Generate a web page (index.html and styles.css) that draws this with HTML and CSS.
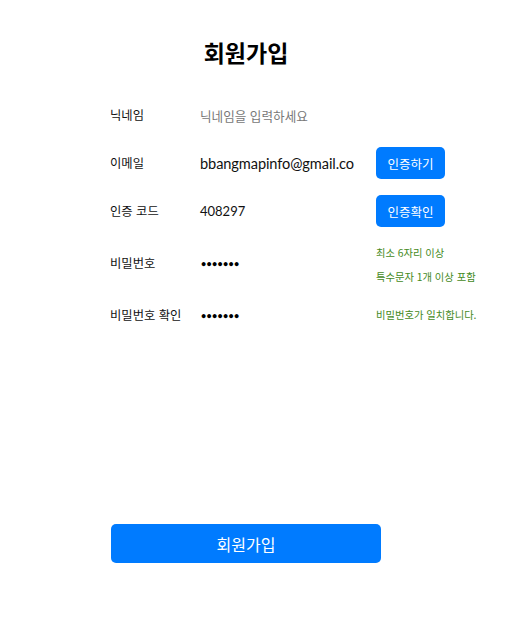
FILE: index.html
```html
<!DOCTYPE html>
<html lang="ko">
<head>
<meta charset="utf-8">
<title>회원가입</title>
<link rel="stylesheet" href="styles.css">
</head>
<body>
<main class="page">
  <h1 class="title">회원가입</h1>
  <div class="form">
    <div class="row">
      <span class="label">닉네임</span>
      <span class="field placeholder">닉네임을 입력하세요</span>
    </div>
    <div class="row">
      <span class="label">이메일</span>
      <span class="field email">bbangmapinfo@gmail.co</span>
      <button class="btn-small">인증하기</button>
    </div>
    <div class="row">
      <span class="label">인증 코드</span>
      <span class="field">408297</span>
      <button class="btn-small">인증확인</button>
    </div>
    <div class="row row-tall">
      <span class="label">비밀번호</span>
      <span class="field dots">•••••••</span>
      <div class="hints hints-low">
        <p class="hint">최소 6자리 이상</p>
        <p class="hint">특수문자 1개 이상 포함</p>
      </div>
    </div>
    <div class="row">
      <span class="label">비밀번호 확인</span>
      <span class="field dots">•••••••</span>
      <div class="hints">
        <p class="hint">비밀번호가 일치합니다.</p>
      </div>
    </div>
  </div>
  <button class="submit">회원가입</button>
</main>
</body>
</html>
```
FILE: styles.css
```css
* { box-sizing: border-box; }
html, body { margin: 0; padding: 0; background: #fff; }
body {
  font-family: "Lato", "Noto Sans CJK KR", sans-serif;
  color: #111;
}
.page {
  width: 270px;
  margin-left: 111px;
  padding-top: 36px;
}
.title {
  margin: 0;
  text-align: center;
  font-family: "Noto Sans CJK KR", sans-serif;
  font-size: 23px;
  font-weight: 700;
  line-height: 32px;
  color: #000;
}
.form {
  margin-top: 31px;
  margin-left: -1px;
  width: 380px;
  display: flex;
  flex-direction: column;
  gap: 16px;
}
.row {
  display: flex;
  align-items: center;
  height: 32px;
}
.row-tall { height: 40px; }
.label {
  width: 90px;
  font-size: 12.3px;
  font-family: "Noto Sans CJK KR", sans-serif;
  color: #111;
}
.field {
  width: 176px;
  font-size: 13px;
  color: #111;
}
.email { font-size: 14.6px; letter-spacing: -0.1px; }
.placeholder {
  font-family: "Noto Sans CJK KR", sans-serif;
  font-size: 12.6px;
  color: #777;
}
.dots {
  font-size: 9px;
  letter-spacing: 0.3px;
  font-weight: 700;
  color: #000;
  padding-left: 1px;
}
.btn-small {
  width: 69px;
  height: 32px;
  border: none;
  border-radius: 5px;
  background: #007bff;
  color: #fff;
  font-family: "Noto Sans CJK KR", sans-serif;
  font-size: 12.5px;
  padding: 0;
}
.hints { display: flex; flex-direction: column; }
.hints-low { margin-top: 4px; }
.hint {
  margin: 0;
  font-family: "Noto Sans CJK KR", sans-serif;
  font-size: 10.3px;
  line-height: 24px;
  color: #448a1c;
  white-space: nowrap;
}
.submit {
  display: block;
  margin-top: 193px;
  width: 270px;
  height: 39px;
  border: none;
  border-radius: 5px;
  background: #007bff;
  color: #fff;
  font-family: "Noto Sans CJK KR", sans-serif;
  font-size: 16px;
  padding: 0;
}
```
